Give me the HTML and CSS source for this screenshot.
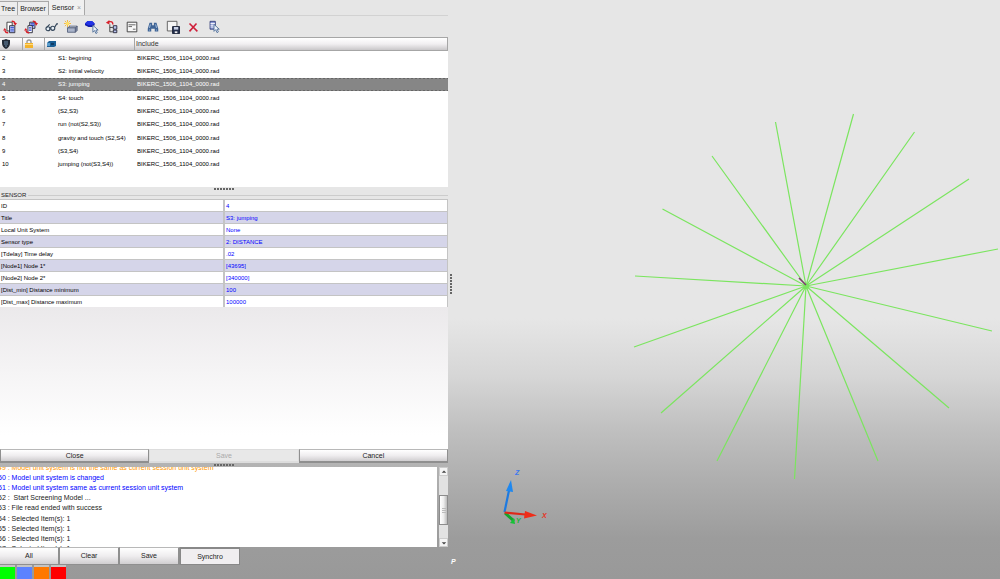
FILE: index.html
```html
<!DOCTYPE html>
<html lang="en">
<head>
<meta charset="utf-8">
<title>Sensor</title>
<link rel="stylesheet" href="styles.css">
</head>
<body>
<div class="app">
  <aside class="side">
    <nav class="tabs">
      <button class="tab">Tree</button>
      <button class="tab">Browser</button>
      <button class="tab tab-active">Sensor <span class="tab-close">×</span></button>
    </nav>

    <div class="toolbar">
      <button class="tool" aria-label="Import"><svg viewBox="0 0 16 16"><path d="M4.500 2.500h6v10h-6z" fill="#fff" stroke="#333"/><path d="M7.500 6.500h6v8h-6z" fill="#c9d3f7" stroke="#223"/><path d="M8.500 8.500h4M8.500 10.500h4M8.500 12.500h4" stroke="#2a44d0"/><path d="M10 1.500q3-.5 4 2.500M2 12q1 3 4 2.500" fill="none" stroke="#d8202a" stroke-width="1.500"/><path d="M12 3.500h4l-2 3zM0 12l2-3 2 3z" fill="#d8202a"/></svg></button>
      <button class="tool" aria-label="Export"><svg viewBox="0 0 16 16"><path d="M6.500 2.500h6v7h-6z" fill="#c9d3f7" stroke="#223"/><path d="M7.500 4.500h4M7.500 6.500h4" stroke="#2a44d0" stroke-width="1.500"/><path d="M4.500 6.500h5v8h-5z" fill="#fff" stroke="#223"/><path d="M5.500 9h3M5.500 11.500h3" stroke="#2a44d0" stroke-width="1.500"/><path d="M10 1.500q3-.5 4 2.500M2 12q1 3 4 2.500" fill="none" stroke="#d8202a" stroke-width="1.500"/><path d="M12 3.500h4l-2 3zM0 12l2-3 2 3z" fill="#d8202a"/></svg></button>
      <button class="tool" aria-label="View"><svg viewBox="0 0 16 16"><g fill="#e6eef5" stroke="#34465a" stroke-width="1.300"><circle cx="4.500" cy="10" r="2.300"/><circle cx="10" cy="9.500" r="2.300"/><path d="M6.500 9.500q1-1 1.500 0M2.500 9l4-4M12 8.500l2.500-4h1.500" fill="none"/></g></svg></button>
      <button class="tool" aria-label="Create"><svg viewBox="0 0 16 16"><path d="M4 0v8M0 4h8M1 1l6 6M7 1L1 7" stroke="#f7b52c"/><circle cx="4" cy="4" r="2" fill="#ffe066"/><path d="M4 9l3-2h8l-2 2z" fill="#d7ddea" stroke="#56617c"/><path d="M4 9h9v5H4z" fill="#aab4ca" stroke="#56617c"/><path d="M13 9l2-2v5l-2 2z" fill="#7c88a3" stroke="#56617c"/></svg></button>
      <button class="tool" aria-label="Select entity"><svg viewBox="0 0 16 16"><path d="M0 4l3-3h5l3 3v2L8 8H4L0 6z" fill="#101ba8"/><path d="M0 4l3-3h5l3 3-3 2H4z" fill="#2233e8"/><path d="M9 6v8l2-2 1.500 3.500 1.500-1-1.500-3H15z" fill="#eef3fb" stroke="#4b6c96"/></svg></button>
      <button class="tool" aria-label="Show in tree"><svg viewBox="0 0 16 16"><path d="M5.500 5v8.500H9M5.500 8.500H9" fill="none" stroke="#333"/><path d="M9.500 6.500h4v4h-4zM9.500 11.500h4v3h-4z" fill="#b8c3ee" stroke="#223"/><path d="M9 5q0-4-5-3" fill="none" stroke="#d8202a" stroke-width="1.600"/><path d="M1 3l4-3v5z" fill="#d8202a"/></svg></button>
      <button class="tool" aria-label="Table"><svg viewBox="0 0 16 16"><path d="M2.500 2.500h11v11h-11z" fill="#f7f7f7" stroke="#333"/><path d="M4 5.500h8M4 7.500h4M9 10.500h3" stroke="#555"/></svg></button>
      <button class="tool" aria-label="Find"><svg viewBox="0 0 16 16"><path d="M4 3h3v3h2V3h3l2 7v3h-4v-3H6v3H2v-3z" fill="#3f6496"/><path d="M5 5L4 9M11 5l1 4M4 11v1M12 11v1" stroke="#b6cde8"/></svg></button>
      <button class="tool" aria-label="Save as"><svg viewBox="0 0 16 16"><path d="M1.500 1.500h11v11h-11z" fill="#f4f4f4" stroke="#555"/><path d="M7.500 7.500h8v8h-8z" fill="#26304d" stroke="#111a30"/><path d="M9 8h5v3H9z" fill="#c9d1e6"/><path d="M10 13h3v2h-3z" fill="#eee"/></svg></button>
      <button class="tool" aria-label="Delete"><svg viewBox="0 0 16 16"><path d="M4 4l9 9M12 4l-8 9" stroke="#cf1f3a" stroke-width="1.800"/></svg></button>
      <button class="tool" aria-label="Pick"><svg viewBox="0 0 16 16"><path d="M3.500 1.500h6v9h-6z" fill="#8d9bd8" stroke="#303c78"/><path d="M4 4h5M4 6h5M4 8h5" stroke="#fff"/><path d="M8 5v8l2-2 1.500 3.500 1.500-1-1.500-3H14z" fill="#eef3fb" stroke="#4b6c96"/></svg></button>
    </div>

    <div class="list">
      <table class="sensors">
        <colgroup><col class="c-id"><col class="c-lock"><col class="c-name"><col></colgroup>
        <thead>
          <tr>
            <th aria-label="ID"><svg viewBox="0 0 10 10"><path d="M1 1q2 0 4-1 2 1 4 1v3q0 4-4 6-4-2-4-6z" fill="#232b38"/><path d="M3 3h4M3 5h4M4 7h2" stroke="#6b8aa8"/></svg></th>
            <th aria-label="Lock"><svg viewBox="0 0 10 10"><path d="M3 5V3q0-2 2-2t2 2v2" fill="none" stroke="#999" stroke-width="1.400"/><path d="M1 4h8v5H1z" fill="#f3b32c"/><path d="M1 5h8v1H1z" fill="#ffd97a"/></svg></th>
            <th aria-label="Name"><svg viewBox="0 0 10 10"><path d="M1 4l2-2h7v5L8 8H1z" fill="#1b5f95"/><path d="M1 4h3v3H1z" fill="#5b9ccb"/><path d="M5 4h3v2H5z" fill="#103c66"/></svg></th>
            <th class="include">Include</th>
          </tr>
        </thead>
        <tbody>
          <tr><td>2</td><td></td><td>S1: begining</td><td>BIKERC_1506_1104_0000.rad</td></tr>
          <tr><td>3</td><td></td><td>S2: initial velocity</td><td>BIKERC_1506_1104_0000.rad</td></tr>
          <tr class="selected"><td>4</td><td></td><td>S3: jumping</td><td>BIKERC_1506_1104_0000.rad</td></tr>
          <tr><td>5</td><td></td><td>S4: touch</td><td>BIKERC_1506_1104_0000.rad</td></tr>
          <tr><td>6</td><td></td><td>(S2,S3)</td><td>BIKERC_1506_1104_0000.rad</td></tr>
          <tr><td>7</td><td></td><td>run (not(S2,S3))</td><td>BIKERC_1506_1104_0000.rad</td></tr>
          <tr><td>8</td><td></td><td>gravity and touch (S2,S4)</td><td>BIKERC_1506_1104_0000.rad</td></tr>
          <tr><td>9</td><td></td><td>(S3,S4)</td><td>BIKERC_1506_1104_0000.rad</td></tr>
          <tr><td>10</td><td></td><td>jumping (not(S3,S4))</td><td>BIKERC_1506_1104_0000.rad</td></tr>
        </tbody>
      </table>
    </div>

    <div class="splitter"><i class="grip"></i></div>

    <section class="props">
      <h2 class="props-title">SENSOR</h2>
      <table class="fields">
        <tr><th>ID</th><td>4</td></tr>
        <tr><th>Title</th><td>S3: jumping</td></tr>
        <tr><th>Local Unit System</th><td>None</td></tr>
        <tr><th>Sensor type</th><td>2: DISTANCE</td></tr>
        <tr><th>[Tdelay] Time delay</th><td>.02</td></tr>
        <tr><th>[Node1] Node 1*</th><td>[43695]</td></tr>
        <tr><th>[Node2] Node 2*</th><td>[340000]</td></tr>
        <tr><th>[Dist_min] Distance minimum</th><td>100</td></tr>
        <tr><th>[Dist_max] Distance maximum</th><td>100000</td></tr>
      </table>
      <div class="props-rest"></div>
    </section>

    <div class="actions">
      <button class="btn">Close</button>
      <button class="btn" disabled>Save</button>
      <button class="btn">Cancel</button>
    </div>

    <div class="splitter"><i class="grip"></i></div>

    <div class="log">
      <div class="log-view">
        <div class="log-lines">
          <p class="warn">49 : Model unit system is not the same as current session unit system</p>
          <p class="info">50 : Model unit system is changed</p>
          <p class="info">51 : Model unit system same as current session unit system</p>
          <p>52 :&nbsp; Start Screening Model ...</p>
          <p>53 : File read ended with success</p>
          <p>54 : Selected Item(s): 1</p>
          <p>55 : Selected Item(s): 1</p>
          <p>56 : Selected Item(s): 1</p>
          <p>57 : Selected Item(s): 1</p>
        </div>
      </div>
      <div class="scroll">
        <button class="scroll-btn" aria-label="Scroll up"><svg viewBox="0 0 8 8"><path d="M1 5l3-3 3 3z" fill="#444"/></svg></button>
        <div class="scroll-track"><div class="scroll-thumb"></div></div>
        <button class="scroll-btn" aria-label="Scroll down"><svg viewBox="0 0 8 8"><path d="M1 3l3 3 3-3z" fill="#444"/></svg></button>
      </div>
    </div>

    <div class="log-actions">
      <button class="btn">All</button>
      <button class="btn">Clear</button>
      <button class="btn">Save</button>
      <button class="btn btn-on">Synchro</button>
    </div>

    <div class="colors">
      <button class="swatch green" aria-label="Green"></button>
      <button class="swatch blue" aria-label="Blue"></button>
      <button class="swatch orange" aria-label="Orange"></button>
      <button class="swatch red" aria-label="Red"></button>
    </div>
  </aside>

  <div class="divider"><i class="grip-v"></i></div>

  <main class="view">
    <svg class="scene" viewBox="456 0 544 579">
      <g stroke="#7be55f" stroke-width="1.200">
        <path d="M806 286L775.500 122M806 286L853.500 114M806 286L914.500 132M806 286L969 179M806 286L998 249M806 286L992 331M806 286L949 408M806 286L878 461M806 286L794.500 479M806 286L717 461M806 286L661 413M806 286L634 347M806 286L635 276M806 286L662.500 209M806 286L712 156"/>
        <circle cx="806.500" cy="286" r="2" fill="#7be55f"/>
      </g>
      <path d="M799 278l7 7" stroke="#7c3a6e" stroke-width="1.500"/>
      <g stroke-width="2.200">
        <path d="M504.500 512l5-24" stroke="#1e7ae0"/><path d="M506 491l5-11 2 12z" fill="#1e88f0"/>
        <path d="M505 513l9 8" stroke="#14a52c" stroke-width="3"/><path d="M515 524l-5-1 4-5z" fill="#16c236"/>
        <path d="M504.500 512.500l21 2" stroke="#e02818"/><path d="M525 511l12 4.500-13 3z" fill="#ef2c18"/>
      </g>
      <g class="axis">
        <text x="515" y="475" fill="#3c78f0">Z</text>
        <text x="542" y="518" fill="#e83020">X</text>
        <text x="516" y="523" fill="#20b038">Y</text>
      </g>
    </svg>
    <span class="mode">P</span>
  </main>
</div>
</body>
</html>
```

FILE: styles.css
```css
* { box-sizing: border-box; }

body {
  margin: 0;
  font: 7px/10px "Liberation Sans", Arial, sans-serif;
  color: #222;
}

button {
  margin: 0;
  padding: 0;
  border: 0;
  background: none;
  font: inherit;
  color: inherit;
}

.app {
  display: grid;
  grid-template-columns: 45% 6px 1fr;
  height: 100vh;
  overflow: hidden;
  background: linear-gradient(#e6e6e6 0 55%, #d6d6d6 65%, #c0c0c0 74%, #aeaeae 83%, #9c9c9c 93%, #999 100%);
}

.side {
  display: flex;
  flex-direction: column;
  min-width: 0;
  padding-right: 2px;
}

.tabs {
  display: flex;
  align-items: flex-end;
  height: 16px;
  border-bottom: 1px solid #d2d2d2;
}

.tab {
  height: 14px;
  padding: 0 2px;
  border: 1px solid #a8a8a8;
  border-width: 1px 1px 0 0;
  background: #ededed;
  white-space: nowrap;
}

.tab:first-child { padding-left: 1px; }

.tab-active {
  height: 16px;
  padding: 0 3px;
  background: #f0f0f0;
}

.tab-close {
  padding-left: 1px;
  color: #999;
}

.toolbar {
  display: grid;
  grid-template-columns: repeat(11, 1fr);
  align-items: center;
  width: 50%;
  height: 21px;
}

.tool {
  display: flex;
  justify-content: center;
}

.tool svg {
  width: 14px;
  height: 14px;
}

.list {
  height: 150px;
  background: #fff;
}

.sensors, .fields {
  width: 100%;
  border-collapse: separate;
  border-spacing: 0;
  table-layout: fixed;
  font-size: 6px;
  color: #000;
}

.sensors { height: 134px; }
.c-id { width: 23px; }
.c-lock { width: 22px; }
.c-name { width: 90px; }

.sensors th, .sensors td {
  padding: 0 2px;
  text-align: left;
  font-weight: normal;
  white-space: nowrap;
}

.sensors th {
  height: 14px;
  padding-left: 1px;
  border: 1px solid #a6a6a6;
  border-width: 1px 1px 1px 0;
  background: linear-gradient(#fff, #f1eff1 50%, #c9c7c9);
}

.sensors .include {
  font-size: 7px;
  color: #333;
}

.sensors th svg {
  display: block;
  width: 10px;
  height: 10px;
}

.sensors td:nth-child(3) { padding: 0 0 0 13px; }

.sensors .selected td {
  background:
    repeating-linear-gradient(90deg, #666 0 2px, #868686 2px 4px) top / 100% 1px no-repeat,
    repeating-linear-gradient(90deg, #666 0 2px, #868686 2px 4px) bottom / 100% 1px no-repeat,
    #868686;
  color: #fff;
}

.splitter {
  display: flex;
  align-items: center;
  justify-content: center;
  height: 4px;
}

.grip {
  width: 21px;
  height: 2px;
  background: repeating-linear-gradient(90deg, #666 0 2px, transparent 2px 3px);
}

.props {
  display: flex;
  flex-direction: column;
  flex: 1;
}

.props-rest {
  flex: 1;
  background: linear-gradient(#ebe9eb, #fff 90%);
}

.props-title {
  display: flex;
  align-items: center;
  gap: 2px;
  height: 8px;
  margin: 0;
  padding-left: 1px;
  font-size: 6px;
  font-weight: normal;
}

.props-title::after {
  content: "";
  flex: 1;
  height: 1px;
  background: #ccc;
}

.fields th, .fields td {
  height: 12px;
  padding: 0 1px;
  border: 1px solid #c4c4c4;
  border-width: 1px 1px 0 0;
  background: #fff;
  text-align: left;
  font-weight: normal;
  line-height: 10px;
}

.fields td {
  border-left: 1px solid #c4c4c4;
  color: #00f;
}

.fields tr:nth-child(even) > * { background: #d5d5e9; }

.actions {
  display: grid;
  grid-template-columns: repeat(3, 1fr);
  height: 14px;
}

.btn {
  border: 1px solid #8f8f8f;
  border-top-color: #b8b8b8;
  background: linear-gradient(#fff, #efedef 50%, #d0ced0);
}

.actions .btn {
  border-width: 1px 1px 2px;
}

.actions .btn:disabled {
  border-color: #ddd;
  background: #e8e8e8;
  color: #aaa;
}

.log {
  display: flex;
  gap: 2px;
  height: 80px;
}

.log-view {
  display: flex;
  flex: 1;
  flex-direction: column;
  justify-content: center;
  overflow: hidden;
  padding-top: 3px;
  background: #fff;
}

.log-lines {
  display: grid;
  flex: none;
  grid-template-rows: repeat(9, 1fr);
  align-items: center;
  height: 92px;
}

.log-lines p {
  margin: 0;
  text-indent: -2px;
  white-space: nowrap;
}

.log-lines .warn { color: #f90; }
.log-lines .info { color: #00f; }

.scroll {
  display: flex;
  flex-direction: column;
  width: 9px;
  background: #e2e2e2;
}

.scroll-btn {
  display: flex;
  align-items: center;
  justify-content: center;
  height: 9px;
  border: 1px solid #ccc;
  background: #f4f4f4;
}

.scroll-btn svg {
  width: 6px;
  height: 6px;
}

.scroll-track {
  display: flex;
  flex: 1;
  flex-direction: column;
  padding-top: 19px;
}

.scroll-thumb {
  height: 30px;
  border: 1px solid #8c8c8c;
  background:
    repeating-linear-gradient(#bbb 0 1px, transparent 1px 2px) center / 4px 5px no-repeat,
    linear-gradient(90deg, #fff, #eee 50%, #bbb);
}

.log-actions {
  display: grid;
  grid-template-columns: repeat(4, 60px);
  height: 18px;
}

.log-actions .btn { border-width: 1px 2px 1px 0; }
.log-actions .btn-on {
  border: 1px solid #888;
  border-width: 2px 1px 1px;
  background: #f0eef0;
}

.colors {
  display: flex;
  gap: 2px;
  height: 14px;
}

.swatch {
  width: 15px;
  border-top: 2px solid #c4c4c4;
}

.green { background: #0f0; }
.blue { background: #5b82ff; }
.orange { background: #ff7800; }
.red { background: #f00; }

.divider {
  display: flex;
  align-items: center;
}

.grip-v {
  width: 2px;
  height: 20px;
  margin-bottom: 12px;
  background: repeating-linear-gradient(#666 0 2px, transparent 2px 3px);
}

.view {
  position: relative;
  min-width: 0;
}

.scene {
  display: block;
  width: 100%;
  height: 100%;
}

.axis {
  font-size: 7px;
  font-style: italic;
  font-weight: bold;
}

.mode {
  position: absolute;
  left: -5px;
  bottom: 12px;
  color: #fff;
  font-style: italic;
  font-weight: bold;
}
```
